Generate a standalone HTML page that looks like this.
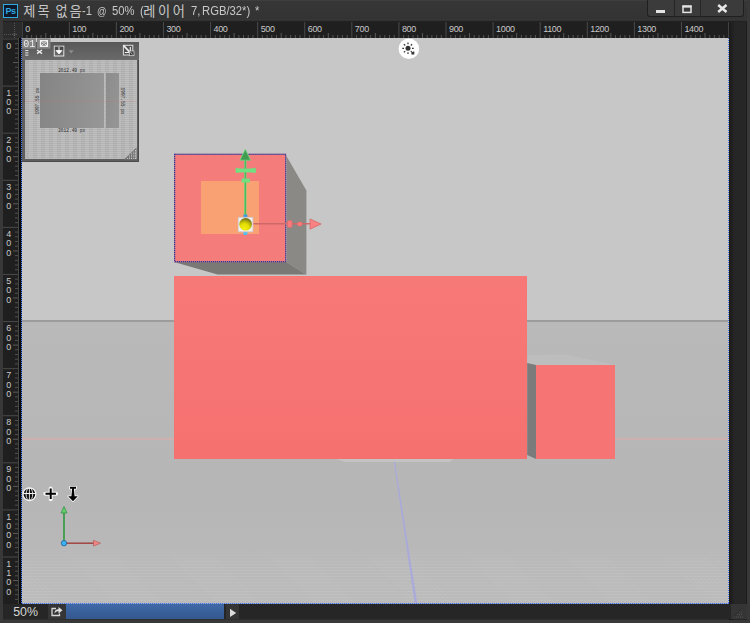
<!DOCTYPE html>
<html lang="ko">
<head>
<meta charset="utf-8">
<title>제목 없음-1 @ 50% (레이어 7, RGB/32*) *</title>
<style>
html,body{margin:0;padding:0;}
body{width:750px;height:623px;overflow:hidden;background:#333;position:relative;font-family:"Liberation Sans","NanumGothic","Noto Sans CJK KR",sans-serif;}
.abs{position:absolute;}
#frame{left:0;top:0;width:750px;height:623px;background:#383838;}
#inner{left:3px;top:0;width:744px;height:620px;background:#2e2e2e;}
#title{left:3px;top:0;width:744px;height:22px;background:linear-gradient(#424242 0,#363636 1.5px,#333333 19px,#383838 20px,#2a2a2a 21px,#191919 22px);}
#pslogo{left:3px;top:3.7px;width:13.1px;height:12.5px;border:1px solid #31a8e0;background:#0e1a2c;color:#31a8e0;font-size:9px;font-weight:bold;line-height:13px;text-align:center;letter-spacing:-0.5px;}
#ttext{left:0;top:0;height:22px;width:300px;color:#c8c8c8;white-space:nowrap;}
#ttext span{position:absolute;top:0;line-height:21.8px;height:22px;}
#ttext .ko{font-family:"Noto Sans CJK KR","NanumGothic",sans-serif;font-size:13.2px;letter-spacing:2px;word-spacing:-1.8px;line-height:21px;}
#ttext .la{font-family:"Liberation Sans",sans-serif;font-size:12px;line-height:22.4px;transform:scaleX(0.94);transform-origin:0 0;}
#wbtns{left:647px;top:0;width:97px;height:17px;background:#3b3b3b;border:1px solid #1f1f1f;border-top:none;border-radius:0 0 3px 3px;box-sizing:border-box;}
.wdiv{top:0;width:1px;height:17px;background:#262626;}
#rulerbg{left:3px;top:22px;width:726px;height:582px;background:#1f1f1f;}
#rcorner{left:3px;top:22px;width:18px;height:16px;background:#2b2b2b;}
#rightbar{left:729px;top:22px;width:18px;height:598px;background:linear-gradient(90deg,#1a1a1a,#262626 6px,#262626 16.5px,#1c1c1c 17.5px,#2c2c2c 18px);}
#status{left:3px;top:604px;width:744px;height:15px;background:#262626;}
.rt{font-family:"Liberation Sans",sans-serif;font-size:9px;fill:#c8c8c8;letter-spacing:-0.35px;}
#canvas{left:21px;top:38px;width:708px;height:566px;background:#c7c7c7;overflow:hidden;}
#ground{left:0;top:283px;width:708px;height:283px;background:linear-gradient(#b9b9b9,#b6b6b6 60%,#bababa);}
#dither{left:0;top:505px;width:708px;height:61px;background-image:repeating-linear-gradient(45deg,rgba(255,255,255,0.05) 0 1px,transparent 1px 2.8px),repeating-linear-gradient(0deg,rgba(255,255,255,0.07) 0 1px,transparent 1px 3px);-webkit-mask-image:linear-gradient(transparent,#000 35%);mask-image:linear-gradient(transparent,#000 35%);}
#horizon{left:0;top:282px;width:708px;height:2px;background:#9c9c9c;}
#bl{left:19px;top:38px;width:1.5px;height:566px;background:#0b0b0b;}
#bl2{left:20.5px;top:38px;width:1.5px;height:566px;background:repeating-linear-gradient(180deg,#4a78e6 0 1px,#16203a 1px 2px);}
#br{left:727.7px;top:38px;width:1.1px;height:566px;background:repeating-linear-gradient(180deg,#3f6ee6 0 1px,#d9d6c8 1px 2px);}
#bb{left:22px;top:603px;width:706.8px;height:1.1px;background:repeating-linear-gradient(90deg,#3f6ee6 0 1px,#a9b2cc 1px 2px);}
#vrline{left:18px;top:38px;width:1px;height:566px;background:#484848;}
</style>
</head>
<body>
<div id="frame" class="abs"></div>
<div id="inner" class="abs"></div>
<div id="title" class="abs"></div>
<div id="pslogo" class="abs">Ps</div>
<div id="ttext" class="abs"><span class="ko" style="left:23.3px">제목 없음</span><span class="la" style="left:82.2px">-1</span><span class="la" style="left:97px;font-size:10px;top:0.5px">@</span><span class="la" style="left:112px">50%</span><span class="la" style="left:139.5px">(</span><span class="ko" style="left:143.3px;letter-spacing:2.6px">레이어</span><span class="la" style="left:190.5px">7,</span><span class="la" style="left:201.5px">RGB/32*)</span><span class="la" style="left:254.5px">*</span></div>
<div id="wbtns" class="abs">
  <div class="abs wdiv" style="left:26px"></div>
  <div class="abs wdiv" style="left:52px"></div>
  <svg class="abs" style="left:0;top:0" width="97" height="16" viewBox="0 0 97 16">
    <rect x="8" y="10" width="9" height="3" fill="#e4e4e4"/>
    <rect x="35" y="6.8" width="8" height="5.6" fill="none" stroke="#e4e4e4" stroke-width="1.5"/><rect x="34.250" y="5.200" width="9.500" height="2" fill="#e4e4e4"/>
    <path d="M70.200 5 L78.500 12 M78.500 5 L70.200 12" stroke="#e8e8e8" stroke-width="2.500" fill="none"/>
  </svg>
</div>

<div id="rulerbg" class="abs"></div>
<div id="rcorner" class="abs">
  <svg width="18" height="16" viewBox="0 0 18 16"><path d="M1 12.500H15M11.500 1V16" stroke="#555" stroke-width="1" stroke-dasharray="1 1" fill="none"/><path d="M11.500 11l1.500 1.500l-1.500 1.500l-1.500-1.500z" fill="none" stroke="#666" stroke-width="0.600"/></svg>
</div>
<svg class="abs" style="left:0;top:22px" width="729" height="16" viewBox="0 0 729 16">
<rect x="21.70" y="0" width="1" height="16" fill="#4a4a4a"/>
<rect x="26.41" y="13" width="1" height="3" fill="#555"/>
<rect x="31.12" y="13" width="1" height="3" fill="#555"/>
<rect x="35.83" y="13" width="1" height="3" fill="#555"/>
<rect x="40.54" y="13" width="1" height="3" fill="#555"/>
<rect x="45.25" y="11" width="1" height="5" fill="#5a5a5a"/>
<rect x="49.95" y="13" width="1" height="3" fill="#555"/>
<rect x="54.66" y="13" width="1" height="3" fill="#555"/>
<rect x="59.37" y="13" width="1" height="3" fill="#555"/>
<rect x="64.08" y="13" width="1" height="3" fill="#555"/>
<rect x="68.79" y="0" width="1" height="16" fill="#4a4a4a"/>
<rect x="73.50" y="13" width="1" height="3" fill="#555"/>
<rect x="78.21" y="13" width="1" height="3" fill="#555"/>
<rect x="82.92" y="13" width="1" height="3" fill="#555"/>
<rect x="87.63" y="13" width="1" height="3" fill="#555"/>
<rect x="92.34" y="11" width="1" height="5" fill="#5a5a5a"/>
<rect x="97.04" y="13" width="1" height="3" fill="#555"/>
<rect x="101.75" y="13" width="1" height="3" fill="#555"/>
<rect x="106.46" y="13" width="1" height="3" fill="#555"/>
<rect x="111.17" y="13" width="1" height="3" fill="#555"/>
<rect x="115.88" y="0" width="1" height="16" fill="#4a4a4a"/>
<rect x="120.59" y="13" width="1" height="3" fill="#555"/>
<rect x="125.30" y="13" width="1" height="3" fill="#555"/>
<rect x="130.01" y="13" width="1" height="3" fill="#555"/>
<rect x="134.72" y="13" width="1" height="3" fill="#555"/>
<rect x="139.42" y="11" width="1" height="5" fill="#5a5a5a"/>
<rect x="144.13" y="13" width="1" height="3" fill="#555"/>
<rect x="148.84" y="13" width="1" height="3" fill="#555"/>
<rect x="153.55" y="13" width="1" height="3" fill="#555"/>
<rect x="158.26" y="13" width="1" height="3" fill="#555"/>
<rect x="162.97" y="0" width="1" height="16" fill="#4a4a4a"/>
<rect x="167.68" y="13" width="1" height="3" fill="#555"/>
<rect x="172.39" y="13" width="1" height="3" fill="#555"/>
<rect x="177.10" y="13" width="1" height="3" fill="#555"/>
<rect x="181.81" y="13" width="1" height="3" fill="#555"/>
<rect x="186.51" y="11" width="1" height="5" fill="#5a5a5a"/>
<rect x="191.22" y="13" width="1" height="3" fill="#555"/>
<rect x="195.93" y="13" width="1" height="3" fill="#555"/>
<rect x="200.64" y="13" width="1" height="3" fill="#555"/>
<rect x="205.35" y="13" width="1" height="3" fill="#555"/>
<rect x="210.06" y="0" width="1" height="16" fill="#4a4a4a"/>
<rect x="214.77" y="13" width="1" height="3" fill="#555"/>
<rect x="219.48" y="13" width="1" height="3" fill="#555"/>
<rect x="224.19" y="13" width="1" height="3" fill="#555"/>
<rect x="228.90" y="13" width="1" height="3" fill="#555"/>
<rect x="233.61" y="11" width="1" height="5" fill="#5a5a5a"/>
<rect x="238.31" y="13" width="1" height="3" fill="#555"/>
<rect x="243.02" y="13" width="1" height="3" fill="#555"/>
<rect x="247.73" y="13" width="1" height="3" fill="#555"/>
<rect x="252.44" y="13" width="1" height="3" fill="#555"/>
<rect x="257.15" y="0" width="1" height="16" fill="#4a4a4a"/>
<rect x="261.86" y="13" width="1" height="3" fill="#555"/>
<rect x="266.57" y="13" width="1" height="3" fill="#555"/>
<rect x="271.28" y="13" width="1" height="3" fill="#555"/>
<rect x="275.99" y="13" width="1" height="3" fill="#555"/>
<rect x="280.69" y="11" width="1" height="5" fill="#5a5a5a"/>
<rect x="285.40" y="13" width="1" height="3" fill="#555"/>
<rect x="290.11" y="13" width="1" height="3" fill="#555"/>
<rect x="294.82" y="13" width="1" height="3" fill="#555"/>
<rect x="299.53" y="13" width="1" height="3" fill="#555"/>
<rect x="304.24" y="0" width="1" height="16" fill="#4a4a4a"/>
<rect x="308.95" y="13" width="1" height="3" fill="#555"/>
<rect x="313.66" y="13" width="1" height="3" fill="#555"/>
<rect x="318.37" y="13" width="1" height="3" fill="#555"/>
<rect x="323.08" y="13" width="1" height="3" fill="#555"/>
<rect x="327.79" y="11" width="1" height="5" fill="#5a5a5a"/>
<rect x="332.49" y="13" width="1" height="3" fill="#555"/>
<rect x="337.20" y="13" width="1" height="3" fill="#555"/>
<rect x="341.91" y="13" width="1" height="3" fill="#555"/>
<rect x="346.62" y="13" width="1" height="3" fill="#555"/>
<rect x="351.33" y="0" width="1" height="16" fill="#4a4a4a"/>
<rect x="356.04" y="13" width="1" height="3" fill="#555"/>
<rect x="360.75" y="13" width="1" height="3" fill="#555"/>
<rect x="365.46" y="13" width="1" height="3" fill="#555"/>
<rect x="370.17" y="13" width="1" height="3" fill="#555"/>
<rect x="374.88" y="11" width="1" height="5" fill="#5a5a5a"/>
<rect x="379.58" y="13" width="1" height="3" fill="#555"/>
<rect x="384.29" y="13" width="1" height="3" fill="#555"/>
<rect x="389.00" y="13" width="1" height="3" fill="#555"/>
<rect x="393.71" y="13" width="1" height="3" fill="#555"/>
<rect x="398.42" y="0" width="1" height="16" fill="#4a4a4a"/>
<rect x="403.13" y="13" width="1" height="3" fill="#555"/>
<rect x="407.84" y="13" width="1" height="3" fill="#555"/>
<rect x="412.55" y="13" width="1" height="3" fill="#555"/>
<rect x="417.26" y="13" width="1" height="3" fill="#555"/>
<rect x="421.96" y="11" width="1" height="5" fill="#5a5a5a"/>
<rect x="426.67" y="13" width="1" height="3" fill="#555"/>
<rect x="431.38" y="13" width="1" height="3" fill="#555"/>
<rect x="436.09" y="13" width="1" height="3" fill="#555"/>
<rect x="440.80" y="13" width="1" height="3" fill="#555"/>
<rect x="445.51" y="0" width="1" height="16" fill="#4a4a4a"/>
<rect x="450.22" y="13" width="1" height="3" fill="#555"/>
<rect x="454.93" y="13" width="1" height="3" fill="#555"/>
<rect x="459.64" y="13" width="1" height="3" fill="#555"/>
<rect x="464.35" y="13" width="1" height="3" fill="#555"/>
<rect x="469.06" y="11" width="1" height="5" fill="#5a5a5a"/>
<rect x="473.76" y="13" width="1" height="3" fill="#555"/>
<rect x="478.47" y="13" width="1" height="3" fill="#555"/>
<rect x="483.18" y="13" width="1" height="3" fill="#555"/>
<rect x="487.89" y="13" width="1" height="3" fill="#555"/>
<rect x="492.60" y="0" width="1" height="16" fill="#4a4a4a"/>
<rect x="497.31" y="13" width="1" height="3" fill="#555"/>
<rect x="502.02" y="13" width="1" height="3" fill="#555"/>
<rect x="506.73" y="13" width="1" height="3" fill="#555"/>
<rect x="511.44" y="13" width="1" height="3" fill="#555"/>
<rect x="516.15" y="11" width="1" height="5" fill="#5a5a5a"/>
<rect x="520.85" y="13" width="1" height="3" fill="#555"/>
<rect x="525.56" y="13" width="1" height="3" fill="#555"/>
<rect x="530.27" y="13" width="1" height="3" fill="#555"/>
<rect x="534.98" y="13" width="1" height="3" fill="#555"/>
<rect x="539.69" y="0" width="1" height="16" fill="#4a4a4a"/>
<rect x="544.40" y="13" width="1" height="3" fill="#555"/>
<rect x="549.11" y="13" width="1" height="3" fill="#555"/>
<rect x="553.82" y="13" width="1" height="3" fill="#555"/>
<rect x="558.53" y="13" width="1" height="3" fill="#555"/>
<rect x="563.24" y="11" width="1" height="5" fill="#5a5a5a"/>
<rect x="567.94" y="13" width="1" height="3" fill="#555"/>
<rect x="572.65" y="13" width="1" height="3" fill="#555"/>
<rect x="577.36" y="13" width="1" height="3" fill="#555"/>
<rect x="582.07" y="13" width="1" height="3" fill="#555"/>
<rect x="586.78" y="0" width="1" height="16" fill="#4a4a4a"/>
<rect x="591.49" y="13" width="1" height="3" fill="#555"/>
<rect x="596.20" y="13" width="1" height="3" fill="#555"/>
<rect x="600.91" y="13" width="1" height="3" fill="#555"/>
<rect x="605.62" y="13" width="1" height="3" fill="#555"/>
<rect x="610.33" y="11" width="1" height="5" fill="#5a5a5a"/>
<rect x="615.03" y="13" width="1" height="3" fill="#555"/>
<rect x="619.74" y="13" width="1" height="3" fill="#555"/>
<rect x="624.45" y="13" width="1" height="3" fill="#555"/>
<rect x="629.16" y="13" width="1" height="3" fill="#555"/>
<rect x="633.87" y="0" width="1" height="16" fill="#4a4a4a"/>
<rect x="638.58" y="13" width="1" height="3" fill="#555"/>
<rect x="643.29" y="13" width="1" height="3" fill="#555"/>
<rect x="648.00" y="13" width="1" height="3" fill="#555"/>
<rect x="652.71" y="13" width="1" height="3" fill="#555"/>
<rect x="657.42" y="11" width="1" height="5" fill="#5a5a5a"/>
<rect x="662.12" y="13" width="1" height="3" fill="#555"/>
<rect x="666.83" y="13" width="1" height="3" fill="#555"/>
<rect x="671.54" y="13" width="1" height="3" fill="#555"/>
<rect x="676.25" y="13" width="1" height="3" fill="#555"/>
<rect x="680.96" y="0" width="1" height="16" fill="#4a4a4a"/>
<rect x="685.67" y="13" width="1" height="3" fill="#555"/>
<rect x="690.38" y="13" width="1" height="3" fill="#555"/>
<rect x="695.09" y="13" width="1" height="3" fill="#555"/>
<rect x="699.80" y="13" width="1" height="3" fill="#555"/>
<rect x="704.51" y="11" width="1" height="5" fill="#5a5a5a"/>
<rect x="709.21" y="13" width="1" height="3" fill="#555"/>
<rect x="713.92" y="13" width="1" height="3" fill="#555"/>
<rect x="718.63" y="13" width="1" height="3" fill="#555"/>
<rect x="723.34" y="13" width="1" height="3" fill="#555"/>
<text x="25.20" y="9.5" class="rt">0</text>
<text x="72.29" y="9.5" class="rt">100</text>
<text x="119.38" y="9.5" class="rt">200</text>
<text x="166.47" y="9.5" class="rt">300</text>
<text x="213.56" y="9.5" class="rt">400</text>
<text x="260.65" y="9.5" class="rt">500</text>
<text x="307.74" y="9.5" class="rt">600</text>
<text x="354.83" y="9.5" class="rt">700</text>
<text x="401.92" y="9.5" class="rt">800</text>
<text x="449.01" y="9.5" class="rt">900</text>
<text x="496.10" y="9.5" class="rt">1000</text>
<text x="543.19" y="9.5" class="rt">1100</text>
<text x="590.28" y="9.5" class="rt">1200</text>
<text x="637.37" y="9.5" class="rt">1300</text>
<text x="684.46" y="9.5" class="rt">1400</text>
<rect x="728.2" y="0" width="1" height="16" fill="#4a4a4a"/>
</svg>
<svg class="abs" style="left:3px;top:38px" width="18" height="566" viewBox="0 0 18 566">
<rect x="0" y="0.50" width="15.5" height="1" fill="#4a4a4a"/>
<rect x="12" y="5.21" width="3" height="1" fill="#505050"/>
<rect x="12" y="9.92" width="3" height="1" fill="#505050"/>
<rect x="12" y="14.63" width="3" height="1" fill="#505050"/>
<rect x="12" y="19.34" width="3" height="1" fill="#505050"/>
<rect x="10" y="24.05" width="5" height="1" fill="#5a5a5a"/>
<rect x="12" y="28.75" width="3" height="1" fill="#505050"/>
<rect x="12" y="33.46" width="3" height="1" fill="#505050"/>
<rect x="12" y="38.17" width="3" height="1" fill="#505050"/>
<rect x="12" y="42.88" width="3" height="1" fill="#505050"/>
<rect x="0" y="47.59" width="15.5" height="1" fill="#4a4a4a"/>
<rect x="12" y="52.30" width="3" height="1" fill="#505050"/>
<rect x="12" y="57.01" width="3" height="1" fill="#505050"/>
<rect x="12" y="61.72" width="3" height="1" fill="#505050"/>
<rect x="12" y="66.43" width="3" height="1" fill="#505050"/>
<rect x="10" y="71.14" width="5" height="1" fill="#5a5a5a"/>
<rect x="12" y="75.84" width="3" height="1" fill="#505050"/>
<rect x="12" y="80.55" width="3" height="1" fill="#505050"/>
<rect x="12" y="85.26" width="3" height="1" fill="#505050"/>
<rect x="12" y="89.97" width="3" height="1" fill="#505050"/>
<rect x="0" y="94.68" width="15.5" height="1" fill="#4a4a4a"/>
<rect x="12" y="99.39" width="3" height="1" fill="#505050"/>
<rect x="12" y="104.10" width="3" height="1" fill="#505050"/>
<rect x="12" y="108.81" width="3" height="1" fill="#505050"/>
<rect x="12" y="113.52" width="3" height="1" fill="#505050"/>
<rect x="10" y="118.22" width="5" height="1" fill="#5a5a5a"/>
<rect x="12" y="122.93" width="3" height="1" fill="#505050"/>
<rect x="12" y="127.64" width="3" height="1" fill="#505050"/>
<rect x="12" y="132.35" width="3" height="1" fill="#505050"/>
<rect x="12" y="137.06" width="3" height="1" fill="#505050"/>
<rect x="0" y="141.77" width="15.5" height="1" fill="#4a4a4a"/>
<rect x="12" y="146.48" width="3" height="1" fill="#505050"/>
<rect x="12" y="151.19" width="3" height="1" fill="#505050"/>
<rect x="12" y="155.90" width="3" height="1" fill="#505050"/>
<rect x="12" y="160.61" width="3" height="1" fill="#505050"/>
<rect x="10" y="165.31" width="5" height="1" fill="#5a5a5a"/>
<rect x="12" y="170.02" width="3" height="1" fill="#505050"/>
<rect x="12" y="174.73" width="3" height="1" fill="#505050"/>
<rect x="12" y="179.44" width="3" height="1" fill="#505050"/>
<rect x="12" y="184.15" width="3" height="1" fill="#505050"/>
<rect x="0" y="188.86" width="15.5" height="1" fill="#4a4a4a"/>
<rect x="12" y="193.57" width="3" height="1" fill="#505050"/>
<rect x="12" y="198.28" width="3" height="1" fill="#505050"/>
<rect x="12" y="202.99" width="3" height="1" fill="#505050"/>
<rect x="12" y="207.70" width="3" height="1" fill="#505050"/>
<rect x="10" y="212.41" width="5" height="1" fill="#5a5a5a"/>
<rect x="12" y="217.11" width="3" height="1" fill="#505050"/>
<rect x="12" y="221.82" width="3" height="1" fill="#505050"/>
<rect x="12" y="226.53" width="3" height="1" fill="#505050"/>
<rect x="12" y="231.24" width="3" height="1" fill="#505050"/>
<rect x="0" y="235.95" width="15.5" height="1" fill="#4a4a4a"/>
<rect x="12" y="240.66" width="3" height="1" fill="#505050"/>
<rect x="12" y="245.37" width="3" height="1" fill="#505050"/>
<rect x="12" y="250.08" width="3" height="1" fill="#505050"/>
<rect x="12" y="254.79" width="3" height="1" fill="#505050"/>
<rect x="10" y="259.50" width="5" height="1" fill="#5a5a5a"/>
<rect x="12" y="264.20" width="3" height="1" fill="#505050"/>
<rect x="12" y="268.91" width="3" height="1" fill="#505050"/>
<rect x="12" y="273.62" width="3" height="1" fill="#505050"/>
<rect x="12" y="278.33" width="3" height="1" fill="#505050"/>
<rect x="0" y="283.04" width="15.5" height="1" fill="#4a4a4a"/>
<rect x="12" y="287.75" width="3" height="1" fill="#505050"/>
<rect x="12" y="292.46" width="3" height="1" fill="#505050"/>
<rect x="12" y="297.17" width="3" height="1" fill="#505050"/>
<rect x="12" y="301.88" width="3" height="1" fill="#505050"/>
<rect x="10" y="306.59" width="5" height="1" fill="#5a5a5a"/>
<rect x="12" y="311.29" width="3" height="1" fill="#505050"/>
<rect x="12" y="316.00" width="3" height="1" fill="#505050"/>
<rect x="12" y="320.71" width="3" height="1" fill="#505050"/>
<rect x="12" y="325.42" width="3" height="1" fill="#505050"/>
<rect x="0" y="330.13" width="15.5" height="1" fill="#4a4a4a"/>
<rect x="12" y="334.84" width="3" height="1" fill="#505050"/>
<rect x="12" y="339.55" width="3" height="1" fill="#505050"/>
<rect x="12" y="344.26" width="3" height="1" fill="#505050"/>
<rect x="12" y="348.97" width="3" height="1" fill="#505050"/>
<rect x="10" y="353.68" width="5" height="1" fill="#5a5a5a"/>
<rect x="12" y="358.38" width="3" height="1" fill="#505050"/>
<rect x="12" y="363.09" width="3" height="1" fill="#505050"/>
<rect x="12" y="367.80" width="3" height="1" fill="#505050"/>
<rect x="12" y="372.51" width="3" height="1" fill="#505050"/>
<rect x="0" y="377.22" width="15.5" height="1" fill="#4a4a4a"/>
<rect x="12" y="381.93" width="3" height="1" fill="#505050"/>
<rect x="12" y="386.64" width="3" height="1" fill="#505050"/>
<rect x="12" y="391.35" width="3" height="1" fill="#505050"/>
<rect x="12" y="396.06" width="3" height="1" fill="#505050"/>
<rect x="10" y="400.76" width="5" height="1" fill="#5a5a5a"/>
<rect x="12" y="405.47" width="3" height="1" fill="#505050"/>
<rect x="12" y="410.18" width="3" height="1" fill="#505050"/>
<rect x="12" y="414.89" width="3" height="1" fill="#505050"/>
<rect x="12" y="419.60" width="3" height="1" fill="#505050"/>
<rect x="0" y="424.31" width="15.5" height="1" fill="#4a4a4a"/>
<rect x="12" y="429.02" width="3" height="1" fill="#505050"/>
<rect x="12" y="433.73" width="3" height="1" fill="#505050"/>
<rect x="12" y="438.44" width="3" height="1" fill="#505050"/>
<rect x="12" y="443.15" width="3" height="1" fill="#505050"/>
<rect x="10" y="447.86" width="5" height="1" fill="#5a5a5a"/>
<rect x="12" y="452.56" width="3" height="1" fill="#505050"/>
<rect x="12" y="457.27" width="3" height="1" fill="#505050"/>
<rect x="12" y="461.98" width="3" height="1" fill="#505050"/>
<rect x="12" y="466.69" width="3" height="1" fill="#505050"/>
<rect x="0" y="471.40" width="15.5" height="1" fill="#4a4a4a"/>
<rect x="12" y="476.11" width="3" height="1" fill="#505050"/>
<rect x="12" y="480.82" width="3" height="1" fill="#505050"/>
<rect x="12" y="485.53" width="3" height="1" fill="#505050"/>
<rect x="12" y="490.24" width="3" height="1" fill="#505050"/>
<rect x="10" y="494.95" width="5" height="1" fill="#5a5a5a"/>
<rect x="12" y="499.65" width="3" height="1" fill="#505050"/>
<rect x="12" y="504.36" width="3" height="1" fill="#505050"/>
<rect x="12" y="509.07" width="3" height="1" fill="#505050"/>
<rect x="12" y="513.78" width="3" height="1" fill="#505050"/>
<rect x="0" y="518.49" width="15.5" height="1" fill="#4a4a4a"/>
<rect x="12" y="523.20" width="3" height="1" fill="#505050"/>
<rect x="12" y="527.91" width="3" height="1" fill="#505050"/>
<rect x="12" y="532.62" width="3" height="1" fill="#505050"/>
<rect x="12" y="537.33" width="3" height="1" fill="#505050"/>
<rect x="10" y="542.04" width="5" height="1" fill="#5a5a5a"/>
<rect x="12" y="546.74" width="3" height="1" fill="#505050"/>
<rect x="12" y="551.45" width="3" height="1" fill="#505050"/>
<rect x="12" y="556.16" width="3" height="1" fill="#505050"/>
<rect x="12" y="560.87" width="3" height="1" fill="#505050"/>
<text x="5.5" y="10.60" text-anchor="middle" class="rt">0</text>
<text x="5.5" y="57.69" text-anchor="middle" class="rt">1</text>
<text x="5.5" y="67.09" text-anchor="middle" class="rt">0</text>
<text x="5.5" y="76.49" text-anchor="middle" class="rt">0</text>
<text x="5.5" y="104.78" text-anchor="middle" class="rt">2</text>
<text x="5.5" y="114.18" text-anchor="middle" class="rt">0</text>
<text x="5.5" y="123.58" text-anchor="middle" class="rt">0</text>
<text x="5.5" y="151.87" text-anchor="middle" class="rt">3</text>
<text x="5.5" y="161.27" text-anchor="middle" class="rt">0</text>
<text x="5.5" y="170.67" text-anchor="middle" class="rt">0</text>
<text x="5.5" y="198.96" text-anchor="middle" class="rt">4</text>
<text x="5.5" y="208.36" text-anchor="middle" class="rt">0</text>
<text x="5.5" y="217.76" text-anchor="middle" class="rt">0</text>
<text x="5.5" y="246.05" text-anchor="middle" class="rt">5</text>
<text x="5.5" y="255.45" text-anchor="middle" class="rt">0</text>
<text x="5.5" y="264.85" text-anchor="middle" class="rt">0</text>
<text x="5.5" y="293.14" text-anchor="middle" class="rt">6</text>
<text x="5.5" y="302.54" text-anchor="middle" class="rt">0</text>
<text x="5.5" y="311.94" text-anchor="middle" class="rt">0</text>
<text x="5.5" y="340.23" text-anchor="middle" class="rt">7</text>
<text x="5.5" y="349.63" text-anchor="middle" class="rt">0</text>
<text x="5.5" y="359.03" text-anchor="middle" class="rt">0</text>
<text x="5.5" y="387.32" text-anchor="middle" class="rt">8</text>
<text x="5.5" y="396.72" text-anchor="middle" class="rt">0</text>
<text x="5.5" y="406.12" text-anchor="middle" class="rt">0</text>
<text x="5.5" y="434.41" text-anchor="middle" class="rt">9</text>
<text x="5.5" y="443.81" text-anchor="middle" class="rt">0</text>
<text x="5.5" y="453.21" text-anchor="middle" class="rt">0</text>
<text x="5.5" y="481.50" text-anchor="middle" class="rt">1</text>
<text x="5.5" y="490.90" text-anchor="middle" class="rt">0</text>
<text x="5.5" y="500.30" text-anchor="middle" class="rt">0</text>
<text x="5.5" y="509.70" text-anchor="middle" class="rt">0</text>
<text x="5.5" y="528.59" text-anchor="middle" class="rt">1</text>
<text x="5.5" y="537.99" text-anchor="middle" class="rt">1</text>
<text x="5.5" y="547.39" text-anchor="middle" class="rt">0</text>
<text x="5.5" y="556.79" text-anchor="middle" class="rt">0</text>
</svg>
<div id="rightbar" class="abs"></div>

<div id="canvas" class="abs">
  <div id="ground" class="abs"></div>
  <div id="horizon" class="abs"></div>
  <div id="dither" class="abs"></div>
  <svg class="abs" style="left:0;top:0" width="708" height="566" viewBox="21 38 708 566">
    <!-- ground axis lines -->
    <rect x="21" y="437.700" width="708" height="2.400" fill="#cdb0b0"/>
    <path d="M393.600 460.500 L394.800 460.500 L417.400 604 L414.800 604 Z" fill="#a9a9de" opacity="0.9"/>
    <!-- shadow under big block -->
    <path d="M337 459 H453 L450 462 H345 Z" fill="#c6c6c6" opacity="0.85"/>
    <!-- upper cube side & bottom -->
    <path d="M286.400 156 L306.400 190.500 L306.400 274.600 L286.400 262 Z" fill="#8b8986"/>
    <path d="M174 262 L286.400 262 L306.400 274.600 L217.500 274.600 Z" fill="#7b7976"/>
    <!-- upper cube front -->
    <rect x="174" y="154" width="112" height="108" fill="#f47c7b"/>
    <rect x="201" y="181" width="58" height="53" fill="#f9a172"/>
    <rect x="174.600" y="154.300" width="111" height="107.400" fill="none" stroke="#a06c98" stroke-width="1.200"/><rect x="174.600" y="154.300" width="111" height="107.400" fill="none" stroke="#3a3a90" stroke-width="1.200" stroke-dasharray="1 1"/>
    <!-- big block -->
    <defs><linearGradient id="rg" x1="0" y1="0" x2="0" y2="1"><stop offset="0" stop-color="#f77977"/><stop offset="1" stop-color="#f57170"/></linearGradient></defs><rect x="174" y="276" width="353" height="183" fill="url(#rg)"/>
    <!-- small block -->
    <path d="M527.200 355.500 L564 354.300 L615 365 L535 365 L527.200 363 Z" fill="#bdbdbd"/>
    <path d="M527.200 363 L536 365 L536 459 L527.200 455 Z" fill="#7b7b7b"/>
    <rect x="536" y="365" width="79" height="94" fill="#f67574"/>

    <!-- gizmo: green Y axis -->
    <path d="M245.300 159 V216" stroke="#6adc7a" stroke-width="2.300"/>
    <path d="M245.300 160 V216" stroke="#43a652" stroke-width="0.800"/>
    <path d="M245.300 149.300 L250.600 160.200 H240 Z" fill="#3f9c50" stroke="#74d884" stroke-width="0.800" stroke-linejoin="round"/>
    <path d="M236 168.200 Q237.500 169 245.300 169 Q253.500 169 255.400 168.200 L255.400 172.600 Q253.500 171.900 245.300 171.900 Q237.500 171.900 236 172.600 Z" fill="#70e080" stroke="#70e080" stroke-width="0.800" stroke-linejoin="round"/>
    <rect x="241.600" y="178.400" width="8.400" height="4.200" rx="1.200" fill="#70e080"/>
    <rect x="243.400" y="214.600" width="4" height="3.400" fill="#3a9ae2"/>
    <rect x="243.400" y="231.500" width="4" height="3.400" rx="0.800" fill="#52c2f2"/>
    <!-- red X axis -->
    <path d="M253 223.800 H311" stroke="#cf6868" stroke-width="1.500"/>
    <rect x="287.400" y="220.500" width="4.700" height="7" rx="1" fill="#f87a7a" stroke="#dc6666" stroke-width="0.500"/>
    <rect x="297.500" y="222.100" width="4.500" height="3.900" rx="1" fill="#f87a7a" stroke="#dc6666" stroke-width="0.500"/>
    <path d="M321.200 224 L310 218.900 V229.200 Z" fill="#f88282" stroke="#d46464" stroke-width="0.700" stroke-linejoin="round"/>
    <!-- center -->
    <rect x="238.200" y="217.300" width="14.700" height="14.500" fill="#f0f0f0" stroke="#d2c6c6" stroke-width="0.800"/>
    <defs><radialGradient id="ys" cx="0.4" cy="0.82" r="0.85"><stop offset="0" stop-color="#f6f010"/><stop offset="0.45" stop-color="#e2dc00"/><stop offset="0.7" stop-color="#aeaa10"/><stop offset="1" stop-color="#5c5c1c"/></radialGradient></defs>
    <circle cx="245.600" cy="224.300" r="6.300" fill="url(#ys)"/>

    <!-- light icon -->
    <circle cx="408.900" cy="48.700" r="10.300" fill="#ffffff"/>
    <circle cx="408" cy="48.300" r="2.500" fill="#333"/>
    <path d="M408 42.600v1.700M408 52.300v1.700M402.300 48.300h1.700M412 48.300h1.700M403.900 44.200l1.300 1.300M412.100 44.200l-1.300 1.300M403.900 52.400l1.300-1.300M410.800 51.100l2.400 2.400M413.700 51.500v2.400h-2.400" stroke="#333" stroke-width="1.200" fill="none"/>

    <!-- bottom-left 3D axis widget -->
    <path d="M64 512 V542" stroke="#3c9c4a" stroke-width="1.8"/>
    <path d="M64 506.500 L67 513 H61 Z" fill="#62d06c" stroke="#2f8a3c" stroke-width="0.700"/>
    <path d="M66 543.200 H94" stroke="#a04444" stroke-width="1.500"/>
    <path d="M100.500 543.200 L93.500 540.300 V546.100 Z" fill="#f28484" stroke="#b05050" stroke-width="0.600"/>
    <circle cx="64" cy="543.200" r="2.700" fill="#3cb4f2" stroke="#1f5f96" stroke-width="0.800"/>

    <!-- orbit / pan / dolly icons -->
    <circle cx="29.400" cy="494.200" r="6.400" fill="#0c0c0c" stroke="#f4f4f4" stroke-width="1.200"/>
    <path d="M23 493.500H36" stroke="#f4f4f4" stroke-width="1.100"/>
    <path d="M29.400 488V500.500" stroke="#f4f4f4" stroke-width="0.900"/>
    <ellipse cx="29.400" cy="494.200" rx="3.300" ry="6.200" fill="none" stroke="#f4f4f4" stroke-width="0.900"/>
    <path d="M45.300 493.800H56.100M50.700 488.400V499.200" stroke="#ffffff" stroke-width="4" stroke-linecap="round" opacity="0.9"/>
    <path d="M45.500 493.800H55.900M50.700 488.600V499" stroke="#000" stroke-width="2"/>
    <path d="M70 486.800H76V488.800H73.900L74.600 496.300H77.800L73 501.200L68.200 496.300H71.400L72.100 488.800H70Z" fill="#000" stroke="#fff" stroke-width="1.600" stroke-linejoin="round" paint-order="stroke" opacity="0.98"/>
  </svg>

  <!-- secondary view panel -->
  <div class="abs" id="panel" style="left:1.2px;top:3.5px;width:116.9px;height:120px;background:#5e5e5e;box-shadow:inset -1px -1px 0 #4c4c4c;">
    <div class="abs" style="left:0;top:0;width:116.9px;height:18.3px;background:linear-gradient(#585858,#6a6a6a);"></div>
    <div class="abs" style="left:2.8px;top:18.3px;width:111.7px;height:99.2px;background:#b5b5b5;background-image:repeating-linear-gradient(0deg,rgba(255,255,255,0.13) 0 1px,transparent 1px 2px),repeating-linear-gradient(90deg,rgba(0,0,0,0.04) 0 4px,transparent 4px 8px);"></div>
    <div class="abs" style="left:18.3px;top:31.1px;width:63.2px;height:55.4px;background:linear-gradient(100deg,#848484,#979797);"></div>
    <div class="abs" style="left:83.6px;top:31.1px;width:13.6px;height:55.4px;background:linear-gradient(100deg,#8c8c8c,#969696);"></div>
    <div class="abs" style="left:2.8px;top:59.5px;width:111.7px;height:1px;background:rgba(200,120,120,0.22);"></div>
    <div class="abs ptxt" style="left:18px;top:26.2px;width:63px;text-align:center;">2612.49 px</div>
    <div class="abs ptxt" style="left:18px;top:86.2px;width:63px;text-align:center;">2612.49 px</div>
    <div class="abs ptxt" style="left:-9px;top:56.3px;width:50px;text-align:center;transform:rotate(-90deg);">1997.55 px</div>
    <div class="abs ptxt" style="left:75.300px;top:56.3px;width:50px;text-align:center;transform:rotate(90deg);">1997.55 px</div>
    <svg class="abs" style="left:0;top:0" width="117" height="120" viewBox="0 0 117 120">
      <!-- header icons -->
      <path d="M3.200 8.600h3.200M3.200 10.900h3.200M3.200 13.100h3.200" stroke="#e8e8e8" stroke-width="1"/>
      <path d="M15 8l5 3.600M20 8l-5 3.600" stroke="#f0f0f0" stroke-width="1.300"/>
      <rect x="32.300" y="4.200" width="9.500" height="9.800" fill="#666" stroke="#e6e6e6" stroke-width="1"/>
      <rect x="32.800" y="4.700" width="8.500" height="3.500" fill="#484848"/>
      <path d="M37 5v3.800M34.200 8.600h5.600l-2.800 3.300z" fill="#fff" stroke="#fff" stroke-width="0.900"/>
      <path d="M46.600 8.200h5l-2.500 3.200z" fill="#8c8c8c"/>
      <rect x="101.400" y="3.300" width="9.400" height="9.700" fill="#505050" stroke="#dedede" stroke-width="1"/>
      <path d="M101.400 3.300l8 8.500" stroke="#e8e8e8" stroke-width="1.800" fill="none"/>
      <path d="M108.300 5v5.500h-5.500" stroke="#f4f4f4" stroke-width="1.100" fill="none"/>
      <rect x="107.300" y="9" width="4.700" height="4.700" fill="#3a3a3a" stroke="#dcdcdc" stroke-width="0.700"/>
      <path d="M108.300 10l2.200 2.200" stroke="#eee" stroke-width="0.800"/>
      <!-- resize grip -->
      <path d="M102.100 117.500 L114.500 105.400 V117.500 Z" fill="#727272"/>
      <path d="M105.400 117V115.300M107.400 117V113.300M109.600 117V111.200M111.800 117V109M113.500 117V107.500" stroke="#d6d6d6" stroke-width="0.900" stroke-dasharray="1 0.600"/>
    </svg>
  </div>
  <!-- 01 label + envelope -->
  <svg class="abs" style="left:0;top:0;opacity:0.995" width="60" height="20" viewBox="21 38 60 20">
    <rect x="22" y="38.300" width="13.900" height="10.400" fill="#858585"/>
    <rect x="37" y="38.300" width="13.500" height="10.400" fill="#858585"/>
    <rect x="36.100" y="39" width="0.700" height="2" fill="#d8d8d8"/>
    <rect x="40.500" y="40.700" width="6.900" height="5.600" fill="#7c7c7c" stroke="#f6f6f6" stroke-width="1.300"/>
    <path d="M40.500 40.700l3.450 2.700l3.450-2.700M40.500 46.300l2.600-2.400M47.400 46.300l-2.600-2.400" stroke="#f6f6f6" stroke-width="0.900" fill="none"/>
    <text x="23.300" y="47" style="font-family:'Liberation Mono',monospace;font-size:10px;fill:#f0f0f0;">01</text>
  </svg>
</div>
<div id="bl" class="abs"></div><div id="bl2" class="abs"></div><div id="br" class="abs"></div><div id="bb" class="abs"></div><div id="vrline" class="abs"></div>

<div id="status" class="abs"></div>
<div class="abs" style="left:13.2px;top:604.8px;height:15px;line-height:15px;font-size:12.4px;color:#d6d6d6;">50%</div>
<div class="abs" style="left:48px;top:604px;width:18px;height:15px;background:#353535;">
  <svg width="18" height="15" viewBox="0 0 18 15"><path d="M8 4.500H4V11.500H11.500V9.500" stroke="#d8d8d8" stroke-width="1.300" fill="none"/><path d="M6.500 9.500C6.500 6.500 8 5.200 10.500 5.200V3L14.500 6.200L10.500 9.400V7.200C8.800 7.200 7.500 7.800 6.500 9.500Z" fill="#e0e0e0"/></svg>
</div>
<div class="abs" style="left:66px;top:604px;width:158px;height:15px;background:linear-gradient(#3f69a6,#34588f);"></div>
<div class="abs" style="left:226px;top:604px;width:13px;height:15px;background:#353535;">
  <svg width="13" height="15" viewBox="0 0 13 15"><path d="M4 4.800V13L10.200 8.900Z" fill="#dcdcdc"/></svg>
</div>
<div class="abs" style="left:731px;top:604px;width:16px;height:15px;background:#353535;">
  <svg width="16" height="15" viewBox="0 0 16 15"><path d="M3 13h9M6 10.500h6M8 8h4M10 5.500h2" stroke="#555" stroke-width="1" stroke-dasharray="1 1"/><path d="M3 12.500L12 3.500" stroke="#2a2a2a" stroke-width="1"/></svg>
</div>
<style>.ptxt{font-family:"Liberation Mono",monospace;font-size:4.500px;line-height:6px;color:#2e2e2e;white-space:nowrap;}</style>
</body>
</html>
